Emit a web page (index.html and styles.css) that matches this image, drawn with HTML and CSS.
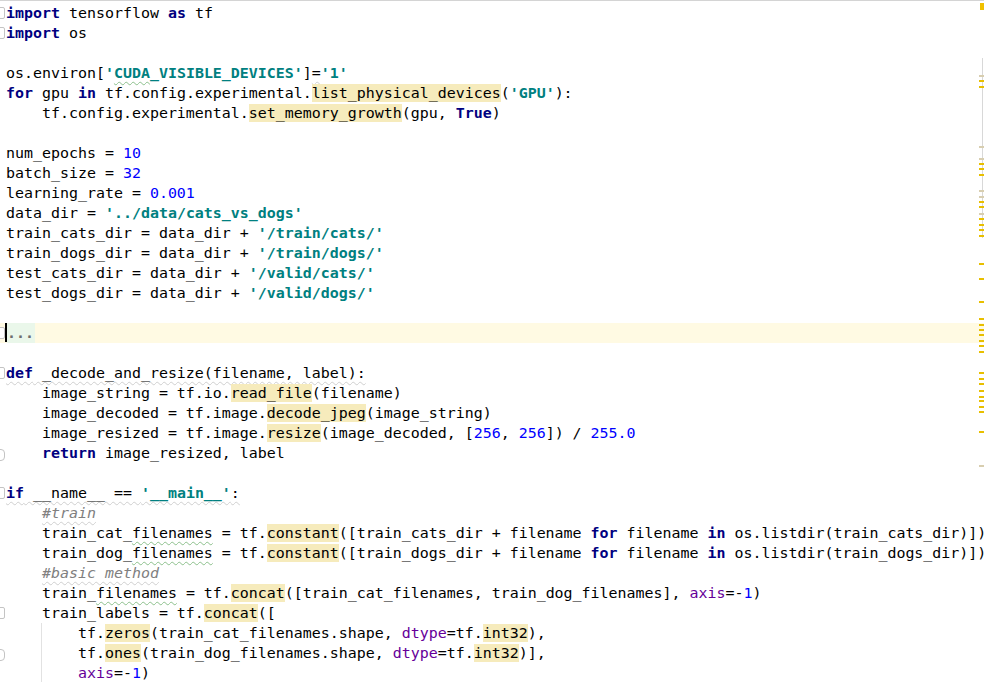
FILE: index.html
```html
<!DOCTYPE html>
<html lang="en">
<head>
  <meta charset="UTF-8">
  <title>main.py</title>
  <link rel="stylesheet" href="styles.css">
</head>
<body>
  <div class="editor">
    <div class="line"><span class="gutter"><i class="fold"></i></span><span class="code"><b class="kw">import</b> tensorflow <b class="kw">as</b> tf</span></div>
    <div class="line"><span class="gutter"><i class="fold"></i></span><span class="code"><b class="kw">import</b> os</span></div>
    <div class="line"><span class="gutter"></span><span class="code"></span></div>
    <div class="line"><span class="gutter"></span><span class="code">os.environ[<b class="str">'<span class="typo">CUDA</span>_VISIBLE_DEVICES'</b>]<span class="weak">=</span><b class="str">'1'</b></span></div>
    <div class="line"><span class="gutter"></span><span class="code"><b class="kw">for</b> gpu <b class="kw">in</b> tf.config.experimental.<span class="hl">list_physical_devices</span>(<b class="str">'GPU'</b>):</span></div>
    <div class="line"><span class="gutter"></span><span class="code">    tf.config.experimental.<span class="hl">set_memory_growth</span>(gpu, <b class="kw">True</b>)</span></div>
    <div class="line"><span class="gutter"></span><span class="code"></span></div>
    <div class="line"><span class="gutter"></span><span class="code">num_epochs = <span class="num">10</span></span></div>
    <div class="line"><span class="gutter"></span><span class="code">batch_size = <span class="num">32</span></span></div>
    <div class="line"><span class="gutter"></span><span class="code">learning_rate = <span class="num">0.001</span></span></div>
    <div class="line"><span class="gutter"></span><span class="code">data_dir = <b class="str">'../data/cats_vs_dogs'</b></span></div>
    <div class="line"><span class="gutter"></span><span class="code">train_cats_dir = data_dir + <b class="str">'/train/cats/'</b></span></div>
    <div class="line"><span class="gutter"></span><span class="code">train_dogs_dir = data_dir + <b class="str">'/train/dogs/'</b></span></div>
    <div class="line"><span class="gutter"></span><span class="code">test_cats_dir = data_dir + <b class="str">'/valid/cats/'</b></span></div>
    <div class="line"><span class="gutter"></span><span class="code">test_dogs_dir = data_dir + <b class="str">'/valid/dogs/'</b></span></div>
    <div class="line"><span class="gutter"></span><span class="code"></span></div>
    <div class="line current"><span class="gutter"><i class="fold"></i></span><span class="code"><span class="caret"></span><span class="folded">...</span></span></div>
    <div class="line"><span class="gutter"></span><span class="code"></span></div>
    <div class="line"><span class="gutter"><i class="fold"></i></span><span class="code"><span class="weak"><b class="kw">def</b> _decode_and_resize(filename, label):</span></span></div>
    <div class="line"><span class="gutter"></span><span class="code">    image_string = tf.io.<span class="hl">read_file</span>(filename)</span></div>
    <div class="line"><span class="gutter"></span><span class="code">    image_decoded = tf.image.<span class="hl">decode_jpeg</span>(image_string)</span></div>
    <div class="line"><span class="gutter"></span><span class="code">    image_resized = tf.image.<span class="hl">resize</span>(image_decoded, [<span class="num">256</span>, <span class="num">256</span>]) / <span class="num">255.0</span></span></div>
    <div class="line"><span class="gutter"><i class="fold end"></i></span><span class="code">    <b class="kw">return</b> image_resized, label</span></div>
    <div class="line"><span class="gutter"></span><span class="code"></span></div>
    <div class="line"><span class="gutter"><i class="fold"></i></span><span class="code"><span class="weak"><b class="kw">if</b> __name__ == <b class="str">'__main__'</b>:</span></span></div>
    <div class="line"><span class="gutter"></span><span class="code">    <span class="cm weak">#train</span></span></div>
    <div class="line"><span class="gutter"></span><span class="code">    train_cat_<span class="typo">filenames</span> = tf.<span class="hl">constant</span>([train_cats_dir + filename <b class="kw">for</b> filename <b class="kw">in</b> os.listdir(train_cats_dir)])</span></div>
    <div class="line"><span class="gutter"></span><span class="code">    train_dog_<span class="typo">filenames</span> = tf.<span class="hl">constant</span>([train_dogs_dir + filename <b class="kw">for</b> filename <b class="kw">in</b> os.listdir(train_dogs_dir)])</span></div>
    <div class="line"><span class="gutter"></span><span class="code">    <span class="cm weak">#basic method</span></span></div>
    <div class="line"><span class="gutter"></span><span class="code">    train_<span class="typo">filenames</span> = tf.<span class="hl">concat</span>([train_cat_filenames, train_dog_filenames], <span class="arg">axis</span>=-<span class="num">1</span>)</span></div>
    <div class="line"><span class="gutter"><i class="fold"></i></span><span class="code">    train_labels = tf.<span class="hl">concat</span>([</span></div>
    <div class="line guide"><span class="gutter"></span><span class="code">        tf.<span class="hl">zeros</span>(train_cat_filenames.shape, <span class="arg">dtype</span>=tf.<span class="hl">int32</span>),</span></div>
    <div class="line guide"><span class="gutter"><i class="fold end"></i></span><span class="code">        tf.<span class="hl">ones</span>(train_dog_filenames.shape, <span class="arg">dtype</span>=tf.<span class="hl">int32</span>)],</span></div>
    <div class="line guide"><span class="gutter"></span><span class="code">        <span class="arg">axis</span>=-<span class="num">1</span>)</span></div>

    <div class="stripe">
      <span class="status"></span>
      <span class="thumb"></span>
      <i class="mark pale" style="top:74px"></i>
      <i class="mark" style="top:79px"></i>
      <i class="mark" style="top:85px"></i>
      <i class="mark pale" style="top:145px"></i>
      <i class="mark pale" style="top:157px"></i>
      <i class="mark" style="top:162px"></i>
      <i class="mark" style="top:167px"></i>
      <i class="mark" style="top:173px"></i>
      <i class="mark pale" style="top:189px"></i>
      <i class="mark pale" style="top:195px"></i>
      <i class="mark" style="top:200px"></i>
      <i class="mark" style="top:205px"></i>
      <i class="mark pale" style="top:212px"></i>
      <i class="mark" style="top:217px"></i>
      <i class="mark" style="top:223px"></i>
      <i class="mark" style="top:228px"></i>
      <i class="mark" style="top:234px"></i>
      <i class="mark" style="top:262px"></i>
      <i class="mark" style="top:277px"></i>
      <i class="mark" style="top:300px"></i>
      <i class="mark" style="top:317px"></i>
      <i class="mark" style="top:323px"></i>
      <i class="mark" style="top:328px"></i>
      <i class="mark" style="top:333px"></i>
      <i class="mark" style="top:339px"></i>
      <i class="mark" style="top:344px"></i>
      <i class="mark" style="top:350px"></i>
      <i class="mark" style="top:371px"></i>
      <i class="mark" style="top:377px"></i>
      <i class="mark" style="top:382px"></i>
      <i class="mark" style="top:389px"></i>
      <i class="mark" style="top:395px"></i>
      <i class="mark" style="top:399px"></i>
      <i class="mark" style="top:405px"></i>
      <i class="mark" style="top:410px"></i>
      <i class="mark" style="top:430px"></i>
      <i class="mark pale" style="top:464px"></i>
    </div>
  </div>
</body>
</html>
```

FILE: styles.css
```css
html, body {
  margin: 0;
  background: #fff;
}

body {
  width: 984px;
  height: 682px;
  overflow: hidden;
}

.editor {
  position: relative;
  height: 681px;
  padding-top: 2px;
  border-top: 1px solid #d4d4d4;
  font-family: "DejaVu Sans Mono", "Liberation Mono", monospace;
  font-size: 14.95px;
  color: #000;
  overflow: hidden;
}

.line {
  display: flex;
  height: 20px;
  line-height: 20px;
  white-space: pre;
}

.line.current {
  background: #fffae3;
}

.line.guide {
  background-image: linear-gradient(#e2e2e2, #e2e2e2);
  background-size: 1px 100%;
  background-position: 41px 0;
  background-repeat: no-repeat;
}

.gutter {
  flex: 0 0 6px;
  position: relative;
}

.fold {
  position: absolute;
  left: -4px;
  top: 4px;
  width: 7px;
  height: 10px;
  border: 1px solid #c4c4c4;
  border-radius: 0 2px 2px 0;
  background: #fff;
}

.fold.end {
  top: 6px;
  border-radius: 0 4px 4px 0;
}

.code {
  display: block;
  white-space: pre;
}

.kw {
  color: #000080;
  font-weight: bold;
}

.str {
  color: #008080;
  font-weight: bold;
}

.num {
  color: #0000ff;
}

.arg {
  color: #660099;
}

.cm {
  color: #808080;
  font-style: italic;
}

.hl {
  background: #f6ebbc;
}

.typo {
  text-decoration: underline wavy #8cc08c;
  text-decoration-thickness: 1px;
  text-underline-offset: 3px;
}

.weak {
  text-decoration: underline wavy #cfcfcf;
  text-decoration-thickness: 1px;
  text-underline-offset: 3px;
}

.caret {
  display: inline-block;
  width: 2px;
  height: 19px;
  margin-left: -1px;
  vertical-align: top;
  background: #000;
}

.folded {
  display: inline-block;
  height: 20px;
  padding-right: 1px;
  vertical-align: top;
  background: #eaf7ea;
  color: #6d6d6d;
  font-weight: bold;
}

.stripe {
  position: absolute;
  top: 0;
  right: 0;
  width: 6px;
  height: 100%;
}

.status {
  position: absolute;
  top: 2px;
  right: 0;
  width: 4px;
  height: 7px;
  background: #f0c000;
}

.thumb {
  position: absolute;
  top: 57px;
  right: 1px;
  width: 1px;
  height: 180px;
  background: #d8d8d8;
}

.mark {
  position: absolute;
  right: 0;
  width: 5px;
  height: 2px;
  background: #e8bf00;
}

.mark.pale {
  background: #d8ceb0;
}
```
